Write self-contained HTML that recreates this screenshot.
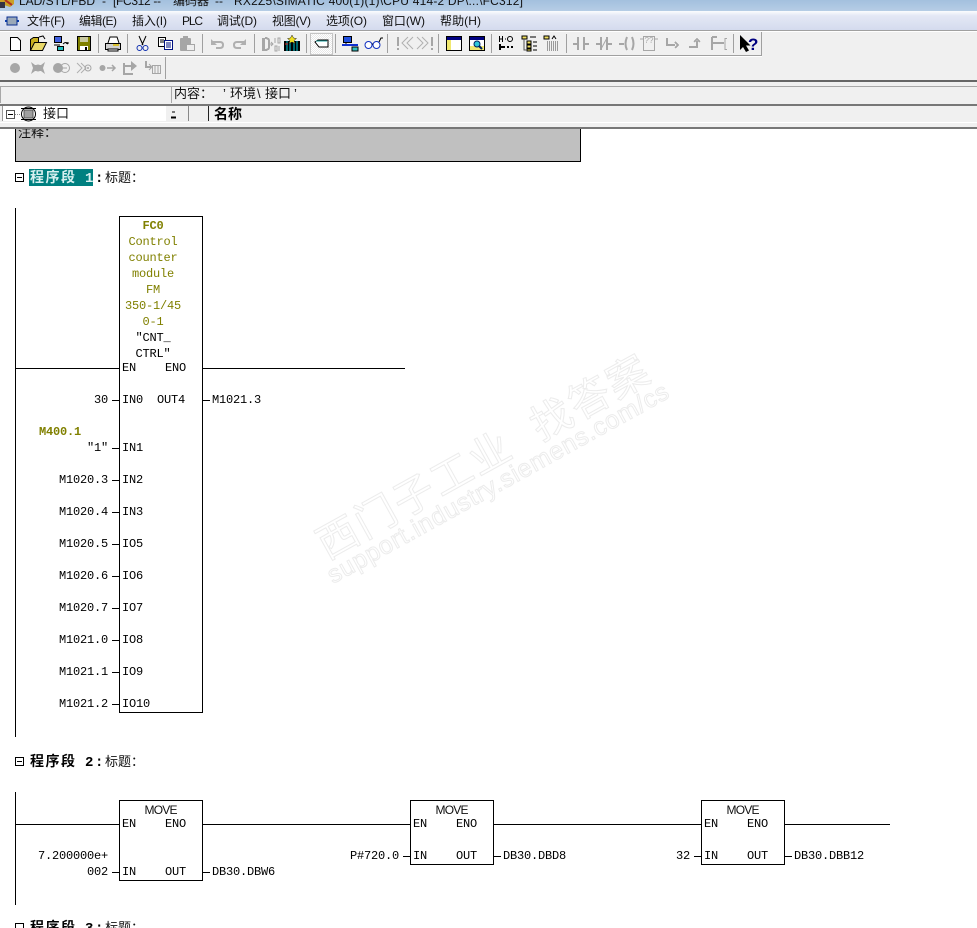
<!DOCTYPE html>
<html lang="zh"><head><meta charset="utf-8"><title>LAD/STL/FBD</title>
<style>
html,body{margin:0;padding:0;background:#fff;width:977px;height:928px;overflow:hidden}
svg{display:block;position:absolute;left:0;top:0}
.m{font:12px "Liberation Mono","Noto Sans CJK SC",monospace;fill:#000;letter-spacing:-.2px;transform:translateY(-1px)}
.o{fill:#808000}
.b{font-weight:bold}
.c{text-anchor:middle}
.r{text-anchor:end}
.s{font:12px "Liberation Sans","Noto Sans CJK SC",sans-serif;fill:#111}
.h{font:bold 14px "Liberation Mono","Noto Sans CJK SC",monospace;fill:#000}
.t{font:13px "Liberation Sans","Noto Sans CJK SC",sans-serif;fill:#111}
.wm{fill:#fff;stroke:#ececec;stroke-width:1;font-family:"Liberation Sans","Noto Sans CJK SC",sans-serif}
.w{stroke:#000;stroke-width:1;fill:none;shape-rendering:crispEdges}
.g{fill:#a6a6a6}
.gs{stroke:#a6a6a6;fill:none;stroke-width:2;shape-rendering:crispEdges}
.e{fill:#a0a0a0}
</style></head><body>
<svg width="977" height="928" viewBox="0 0 977 928" xmlns="http://www.w3.org/2000/svg">
<defs>
<linearGradient id="tb" x1="0" y1="0" x2="0" y2="1"><stop offset="0" stop-color="#a3c0de"/><stop offset="1" stop-color="#b6cde5"/></linearGradient>
<linearGradient id="mb" x1="0" y1="0" x2="0" y2="1"><stop offset="0" stop-color="#fbfcfe"/><stop offset=".25" stop-color="#e4e8f5"/><stop offset="1" stop-color="#d4dbee"/></linearGradient>
<pattern id="dth" width="2" height="2" patternUnits="userSpaceOnUse"><rect width="2" height="2" fill="#fff"/><rect width="1" height="1" fill="#e8e8e8"/><rect x="1" y="1" width="1" height="1" fill="#e8e8e8"/></pattern>
</defs>

<!-- title bar -->
<rect width="977" height="11" fill="url(#tb)"/>
<path d="M0 0h14v4l-4 3-6-2-4 2z" fill="#c9a227"/><path d="M5 0l7 5" stroke="#b03020" stroke-width="2"/><path d="M0 2h5v6H0z" fill="#334"/>
<text class="s" x="19" y="5" textLength="76">LAD/STL/FBD</text>
<text class="s" x="102" y="5">-</text>
<text class="s" x="113" y="5" textLength="48">[FC312 --</text>
<text class="s" x="173" y="5" textLength="36">编码器</text>
<text class="s" x="215" y="5">--</text>
<text class="s" x="234" y="5" textLength="289">RX2Z5\SIMATIC 400(1)(1)\CPU 414-2 DP\...\FC312]</text>

<!-- menu -->
<rect y="11" width="977" height="19" fill="url(#mb)"/>
<path d="M5 21h2M17 21h2" stroke="#0a3fb0" stroke-width="2"/><rect x="7" y="17" width="10" height="8" fill="#9aa8b8" stroke="#0a2f90"/>
<g class="s">
<text class="s" x="27" y="25" textLength="38">文件(F)</text>
<text class="s" x="79" y="25" textLength="38">编辑(E)</text>
<text class="s" x="132" y="25" textLength="35">插入(I)</text>
<text class="s" x="182" y="25" textLength="21">PLC</text>
<text class="s" x="217" y="25" textLength="40">调试(D)</text>
<text class="s" x="272" y="25" textLength="39">视图(V)</text>
<text class="s" x="326" y="25" textLength="41">选项(O)</text>
<text class="s" x="382" y="25" textLength="43">窗口(W)</text>
<text class="s" x="440" y="25" textLength="41">帮助(H)</text>
</g>

<!-- toolbars -->
<rect y="30" width="977" height="50" fill="#f0f0f0"/>
<rect y="30" width="977" height="1" fill="#a0a0a0"/><rect y="31" width="977" height="1" fill="#fff"/>
<rect y="55" width="762" height="1" fill="#a0a0a0"/><rect y="56" width="762" height="1" fill="#fff"/>
<rect x="761" y="32" width="1" height="24" fill="#a0a0a0"/>
<rect x="165" y="57" width="1" height="22" fill="#a0a0a0"/>
<g class="e">
<rect x="98" y="34" width="1" height="19"/><rect x="127" y="34" width="1" height="19"/><rect x="202" y="34" width="1" height="19"/><rect x="254" y="34" width="1" height="19"/><rect x="306" y="34" width="1" height="19"/><rect x="335" y="34" width="1" height="19"/><rect x="387" y="34" width="1" height="19"/><rect x="438" y="34" width="1" height="19"/><rect x="491" y="34" width="1" height="19"/><rect x="566" y="34" width="1" height="19"/><rect x="733" y="34" width="1" height="19"/>
</g>

<!-- new -->
<path d="M10.500 37.500h7l3 3v10h-10z" fill="#fff" stroke="#000"/>
<!-- open -->
<path d="M30.500 39.500l3-2h5v12h-8z" fill="#c8b020" stroke="#000"/><path d="M30.500 50.500l4-8h12l-4 8z" fill="#e8d868" stroke="#000"/><path d="M39 37l4-1 2 3" stroke="#000" fill="none"/>
<!-- net -->
<rect x="54.500" y="36.500" width="7" height="6" fill="#4060e0" stroke="#000"/><path d="M54 45h6" stroke="#000"/><rect x="57.500" y="46.500" width="6" height="4" fill="#20c0c0" stroke="#000"/><path d="M63 44q3-3 5 0M68 44l-2-1M68 44v-2" stroke="#000" fill="none"/>
<!-- save -->
<rect x="77.500" y="36.500" width="13" height="14" fill="#808000" stroke="#000"/><rect x="80" y="37" width="8" height="5" fill="#c8c8a0"/><rect x="80" y="46" width="8" height="4" fill="#fff"/><rect x="85" y="47" width="2" height="3" fill="#000"/>
<!-- print -->
<path d="M108 43l2-6h7l2 6" fill="#fff" stroke="#000"/><rect x="105.500" y="43.500" width="15" height="6" fill="#d0d0d0" stroke="#000"/><rect x="108" y="49" width="10" height="2" fill="#fff" stroke="#000"/><path d="M113 45h6" stroke="#d8c030" stroke-width="2"/>
<!-- cut -->
<path d="M139 36l4 9M146 36l-4 9" stroke="#000" fill="none"/><circle cx="139.500" cy="48" r="2.500" fill="none" stroke="#1030b0"/><circle cx="145.500" cy="48" r="2.500" fill="none" stroke="#1030b0"/>
<!-- copy -->
<rect x="158.500" y="37.500" width="7" height="9" fill="#fff" stroke="#000"/><rect x="164.500" y="40.500" width="8" height="9" fill="#fff" stroke="#001080"/><path d="M166 43h5M166 45h5M166 47h5" stroke="#001080"/><path d="M160 40h4M160 42h4" stroke="#000"/>
<!-- paste -->
<rect x="180" y="38" width="11" height="13" rx="1" class="g"/><rect x="183" y="36" width="5" height="3" class="g"/><rect x="186.500" y="44.500" width="8" height="6" fill="#eee" stroke="#a6a6a6"/>
<!-- undo/redo -->
<path d="M212 42h8q3 0 3 3t-3 3h-4" fill="none" stroke="#b0b0b0" stroke-width="2"/><path d="M211 39v6h6z" fill="#b0b0b0"/>
<path d="M245 42h-8q-3 0-3 3t3 3h4" fill="none" stroke="#b0b0b0" stroke-width="2"/><path d="M246 39v6h-6z" fill="#b0b0b0"/>
<!-- compile -->
<path d="M262 38h3v13h-3z" class="g"/><path d="M265 38q4 0 4 3v6q0 3-4 3" class="gs"/><path d="M268 44h5M271 42l2 2-2 2" stroke="#a6a6a6" fill="none"/><path d="M275 38v5M278 38h2v5h-2zM275 46h2v5h-2zM279 46v5" stroke="#a6a6a6" fill="none"/>
<!-- download -->
<rect x="284" y="41" width="16" height="10" fill="#000"/><path d="M287 41v10M290 43v8M294 41v10M297 41v10" stroke="#00c8d8"/><path d="M285 44h3" stroke="#e02020"/><path d="M292 35l1.500 3 3 .5-2.500 2 1 3-3-1.500-3 1.500 1-3-2.500-2 3-.5z" fill="#f0e020" stroke="#222" stroke-width=".5"/>
<!-- pressed -->
<rect x="310.500" y="33.500" width="22" height="21" fill="url(#dth)" stroke="#c4c4c4"/><path d="M315 42l3-2h10v7h-9z" fill="#fff" stroke="#000"/><path d="M316 41h11" stroke="#20a0a0"/>
<!-- network view -->
<rect x="343.500" y="36.500" width="8" height="6" fill="#2050e0" stroke="#000"/><path d="M346 42v3" stroke="#000"/><path d="M342 45h16" stroke="#1030d0" stroke-width="2"/><rect x="352" y="47" width="6" height="4" fill="#30c0c0" stroke="#000"/>
<!-- glasses -->
<circle cx="368.500" cy="45" r="3.500" fill="#fff" stroke="#1030c0"/><circle cx="376.500" cy="45" r="3.500" fill="#fff" stroke="#1030c0"/><path d="M372 44h1M379 42l2-4h2" stroke="#000" fill="none"/>
<!-- !<< >>! -->
<path d="M397 37h2v9h-2zM397 48h2v2h-2z" class="g"/><path d="M408 37l-6 6 6 6M413 37l-6 6 6 6" fill="none" stroke="#b0b0b0"/>
<path d="M417 37l6 6-6 6M422 37l6 6-6 6" fill="none" stroke="#b0b0b0"/><path d="M431 37h2v9h-2zM431 48h2v2h-2z" class="g"/>
<!-- windows -->
<rect x="446.500" y="36.500" width="15" height="14" fill="#fff" stroke="#000"/><rect x="447" y="37" width="14" height="3" fill="#000080"/><rect x="447" y="40" width="4" height="10" fill="#f0e870"/>
<rect x="469.500" y="36.500" width="15" height="14" fill="#fff" stroke="#000"/><rect x="470" y="37" width="14" height="3" fill="#000080"/><rect x="470" y="46" width="14" height="4" fill="#f0e870"/><circle cx="477" cy="44" r="3" fill="#30c8d8" stroke="#002060"/><path d="M479 46l3 3" stroke="#002060" stroke-width="2"/>
<!-- LAD symbols -->
<path d="M499.500 36v6M502.500 36v6M499 39h3M505 39h1" stroke="#000" fill="none"/><circle cx="510" cy="39" r="2.500" fill="none" stroke="#000"/><rect x="499" y="44" width="2" height="6" fill="#000"/><path d="M501 47h4" stroke="#000" stroke-width="2"/><rect x="507" y="46" width="2" height="2" fill="#000"/><rect x="511" y="46" width="2" height="2" fill="#000"/>
<rect x="522" y="36" width="5" height="3" fill="#f0e060" stroke="#000"/><rect x="527" y="41" width="4" height="3" fill="#f0e060" stroke="#000"/><rect x="527" y="45" width="4" height="3" fill="#f0e060" stroke="#000"/><rect x="527" y="49" width="4" height="2" fill="#f0e060" stroke="#000"/><path d="M533 42h4M533 46h4M533 50h4M530 37h6" stroke="#000"/><path d="M524 39v11h3" stroke="#555" fill="none"/>
<rect x="544" y="36" width="5" height="3" fill="#f0e060" stroke="#000"/><path d="M552 39l2-3 2 3" stroke="#000" fill="none"/><path d="M547 42h12M547 44h12M547 46h12M547 48h12M547 50h12" stroke="#444" stroke-dasharray="1 1"/>
<!-- gray ladder -->
<g class="gs">
<path d="M573 44h4M578 37v13M584 37v13M585 44h4"/>
<path d="M596 44h4M601 37v13M607 37v13M608 44h4"/><path d="M601 49l6-11" stroke-width="1" shape-rendering="auto"/>
<path d="M619 44h5"/><path d="M627 37q-3 7 0 13M632 37q3 7 0 13" shape-rendering="auto"/>
<path d="M643.500 36.500h11v14h-11zM640 39h3M655 39h3" stroke-width="1"/>
<path d="M667 38v7h8"/><path d="M675 42l3 3-3 3" stroke-width="1.500"/>
<path d="M689 47h8v-6"/><path d="M694 42l3-3 3 3" stroke-width="1.500"/>
<path d="M712 37h5M712 37v13M712 43h12"/><path d="M727 38.500h-2v11h2" stroke-width="1"/>
</g>
<text x="649" y="43" text-anchor="middle" style="font:8px 'Liberation Sans',sans-serif;fill:#a6a6a6">??</text>
<!-- help -->
<path d="M740 35v15l3-3 3 5 3-1.500-3-5h4.500z" fill="#000"/><text x="748" y="50" style="font:bold 17px 'Liberation Sans',sans-serif;fill:#000080">?</text>

<!-- toolbar 2 -->
<circle cx="15" cy="68" r="5" class="g"/>
<path d="M31 62l4 3h6l4-3-2 6 2 6-4-3h-6l-4 3 2-6z" class="g"/><circle cx="38" cy="68" r="3.500" class="g"/>
<circle cx="58" cy="68" r="5" class="g"/><circle cx="65" cy="68" r="4.500" fill="none" stroke="#a6a6a6"/><path d="M62 68h5" stroke="#a6a6a6"/>
<path d="M77 63l5 5-5 5M81 63l5 5-5 5" fill="none" stroke="#b0b0b0"/><circle cx="88" cy="68" r="3" fill="none" stroke="#a6a6a6"/><circle cx="88" cy="68" r="1" class="g"/>
<circle cx="102.500" cy="68" r="3" class="g"/><path d="M107 68h7M112 65l3 3-3 3" fill="none" stroke="#a6a6a6" stroke-width="1.500"/>
<path d="M124 63v11h9" class="gs"/><path d="M124 66h9" class="gs"/><path d="M131 61l6 5-6 5z" class="g"/>
<path d="M146 61v6h5" class="gs"/><path d="M149 64l3 3-3 3" stroke="#a6a6a6" fill="none"/><rect x="152.500" y="65.500" width="8" height="8" fill="none" stroke="#a6a6a6"/><path d="M155 66v7M158 66v7" stroke="#a6a6a6"/>

<!-- divider & panel -->
<rect y="80" width="977" height="2" fill="#666"/>
<rect y="82" width="977" height="47" fill="#f0f0f0"/>
<rect y="86" width="977" height="1" fill="#a8a8a8"/>
<rect x="0" y="86" width="1" height="17" fill="#a8a8a8"/>
<rect x="171" y="87" width="1" height="16" fill="#a8a8a8"/>
<g class="t">
<text class="t" x="174" y="98">内容：</text>
<text class="t" x="223" y="98">’</text>
<text class="t" x="230" y="98">环境</text>
<text class="t" x="257" y="98">\</text>
<text class="t" x="265" y="98">接口</text>
<text class="t" x="294" y="98">’</text>
</g>
<rect y="104" width="977" height="2" fill="#777"/>
<rect y="106" width="977" height="16" fill="#f0f0f0"/>
<rect x="2" y="106" width="164" height="15" fill="#fff"/>
<rect x="2" y="106" width="1" height="15" fill="#999"/>
<rect x="6.500" y="110.500" width="8" height="8" fill="#fff" stroke="#555"/><path d="M8 114.500h5" stroke="#000"/><path d="M15 114.500h6" stroke="#888" stroke-dasharray="1 1"/>
<circle cx="28.500" cy="114" r="7" fill="none" stroke="#000"/><rect x="24" y="110" width="9" height="8" fill="#a0a0a0" stroke="#555"/>
<rect x="21" y="108" width="15" height="1" fill="#000"/><rect x="21" y="119" width="15" height="1" fill="#000"/>
<text x="43" y="118" class="t">接口</text>
<path d="M172 112h3" stroke="#000"/><path d="M171 117h5M171 118h5" stroke="#000"/>
<rect x="188" y="106" width="1" height="15" fill="#888"/><rect x="208" y="106" width="1" height="15" fill="#222"/>
<text x="214" y="119" class="h" textLength="28">名称</text>
<rect y="122" width="977" height="1" fill="#fff"/>
<rect y="123" width="977" height="4" fill="#f0f0f0"/>

<!-- watermark -->
<g transform="translate(327 560) rotate(-29)"><text class="wm" x="0" y="0" font-size="41" textLength="372">西门子工业 &#160;找答案</text></g>
<g transform="translate(333 584) rotate(-29)"><text class="wm" x="0" y="0" font-size="25" stroke-width=".8" textLength="386">support.industry.siemens.com/cs</text></g>

<!-- comment -->
<rect x="15.500" y="125.500" width="565" height="36" fill="#c0c0c0" stroke="#000"/>
<rect y="123" width="977" height="4" fill="#f0f0f0"/>
<rect y="127" width="977" height="2" fill="#777"/>
<svg x="0" y="129" width="600" height="12"><text x="18" y="8" class="t">注释：</text></svg>

<!-- network 1 header -->
<rect x="15.500" y="173.500" width="8" height="8" fill="#fff" stroke="#000"/><path d="M17 177.500h5" stroke="#000"/>
<rect x="29" y="169" width="64" height="17" fill="#008080"/>
<text x="30" y="182" class="h" style="fill:#d8f0f0" textLength="45">程序段</text>
<text x="85" y="182" class="h" style="fill:#d8f0f0">1</text>
<text x="95" y="182" class="h">:</text>
<text x="105" y="182" class="t">标题：</text>

<!-- network 1 -->
<g class="w">
<path d="M15.500 208v529"/>
<rect x="119.500" y="216.500" width="83" height="496"/>
<path d="M15 368.500h104M203 368.500h202"/>
<path d="M112 400.500h7M203 400.500h7M112 448.500h7M112 480.500h7M112 512.500h7M112 544.500h7M112 576.500h7M112 608.500h7M112 640.500h7M112 672.500h7M112 704.500h7"/>
</g>
<text class="m o b c" x="153" y="230">FC0</text>
<text class="m o c" x="153" y="246">Control</text>
<text class="m o c" x="153" y="262">counter</text>
<text class="m o c" x="153" y="278">module</text>
<text class="m o c" x="153" y="294">FM</text>
<text class="m o c" x="153" y="310">350-1/45</text>
<text class="m o c" x="153" y="326">0-1</text>
<text class="m c" x="153" y="342">″CNT_</text>
<text class="m c" x="153" y="358">CTRL″</text>
<text class="m" x="122" y="372">EN</text><text class="m" x="165" y="372">ENO</text>
<text class="m r" x="108" y="404">30</text><text class="m" x="122" y="404">IN0</text><text class="m" x="157" y="404">OUT4</text><text class="m" x="212" y="404">M1021.3</text>
<text class="m o b" x="39" y="436">M400.1</text>
<text class="m r" x="108" y="452">″1″</text><text class="m" x="122" y="452">IN1</text>
<text class="m r" x="108" y="484">M1020.3</text><text class="m" x="122" y="484">IN2</text>
<text class="m r" x="108" y="516">M1020.4</text><text class="m" x="122" y="516">IN3</text>
<text class="m r" x="108" y="548">M1020.5</text><text class="m" x="122" y="548">IO5</text>
<text class="m r" x="108" y="580">M1020.6</text><text class="m" x="122" y="580">IO6</text>
<text class="m r" x="108" y="612">M1020.7</text><text class="m" x="122" y="612">IO7</text>
<text class="m r" x="108" y="644">M1021.0</text><text class="m" x="122" y="644">IO8</text>
<text class="m r" x="108" y="676">M1021.1</text><text class="m" x="122" y="676">IO9</text>
<text class="m r" x="108" y="708">M1021.2</text><text class="m" x="122" y="708">IO10</text>

<!-- network 2 header -->
<rect x="15.500" y="757.500" width="8" height="8" fill="#fff" stroke="#000"/><path d="M17 761.500h5" stroke="#000"/>
<text x="30" y="766" class="h" textLength="45">程序段</text>
<text x="85" y="766" class="h">2</text>
<text x="95" y="766" class="h">:</text>
<text x="105" y="766" class="t">标题：</text>

<!-- network 2 -->
<g class="w">
<path d="M15.500 792v113"/>
<rect x="119.500" y="800.500" width="83" height="80"/>
<rect x="410.500" y="800.500" width="83" height="64"/>
<rect x="701.500" y="800.500" width="83" height="64"/>
<path d="M15 824.500h104M203 824.500h207M494 824.500h207M785 824.500h105"/>
<path d="M112 872.500h7M203 872.500h7M403 856.500h7M494 856.500h7M694 856.500h7M785 856.500h7"/>
</g>
<text class="s c" x="161" y="814" textLength="33">MOVE</text><text class="s c" x="452" y="814" textLength="33">MOVE</text><text class="s c" x="743" y="814" textLength="33">MOVE</text>
<text class="m" x="122" y="828">EN</text><text class="m" x="165" y="828">ENO</text>
<text class="m r" x="108" y="860">7.200000e+</text>
<text class="m r" x="108" y="876">002</text><text class="m" x="122" y="876">IN</text><text class="m" x="165" y="876">OUT</text><text class="m" x="212" y="876">DB30.DBW6</text>
<text class="m" x="413" y="828">EN</text><text class="m" x="456" y="828">ENO</text>
<text class="m r" x="399" y="860">P#720.0</text><text class="m" x="413" y="860">IN</text><text class="m" x="456" y="860">OUT</text><text class="m" x="503" y="860">DB30.DBD8</text>
<text class="m" x="704" y="828">EN</text><text class="m" x="747" y="828">ENO</text>
<text class="m r" x="690" y="860">32</text><text class="m" x="704" y="860">IN</text><text class="m" x="747" y="860">OUT</text><text class="m" x="794" y="860">DB30.DBB12</text>

<!-- network 3 header (clipped) -->
<rect x="15.500" y="923.500" width="8" height="8" fill="#fff" stroke="#000"/>
<text x="30" y="932" class="h" textLength="45">程序段</text>
<text x="85" y="932" class="h">3</text>
<text x="95" y="932" class="h">:</text>
<text x="105" y="932" class="t">标题：</text>
</svg>
</body></html>
